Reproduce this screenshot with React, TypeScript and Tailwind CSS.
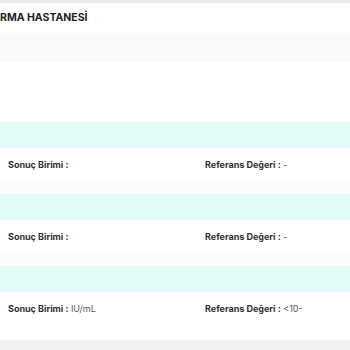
const results = [
  { unit: "", ref: "-" },
  { unit: "", ref: "-" },
  { unit: "IU/mL", ref: "<10-" },
];

export default function App() {
  return (
    <div className="w-[350px] h-[350px] overflow-hidden bg-white text-[#2f2f2f] font-['Inter','Liberation_Sans',sans-serif]">
      <div className="h-[3px] bg-[#eeeeee]" />
      <div className="h-[30px] flex items-center">
        <h1 className="text-[10.5px] font-bold text-[#222]">RMA HASTANESİ</h1>
      </div>
      <div className="h-[29px] bg-[#fafafa]" />
      <div className="h-[60px]" />
      {results.map((r, i) => (
        <div key={i}>
          <div className="h-[26px] bg-[#e2fbf8]" />
          <div className="h-[34px] flex items-center text-[9px]">
            <div className="w-[205px] pl-2">
              <span className="font-bold">Sonuç Birimi :</span>
              {r.unit && <span className="font-normal text-[#555]"> {r.unit}</span>}
            </div>
            <div>
              <span className="font-bold">Referans Değeri :</span>
              <span className="font-normal text-[#555]"> {r.ref}</span>
            </div>
          </div>
          {i < results.length - 1 ? <div className="h-[12px] bg-[#fcfcfc]" /> : <div className="h-[14px]" />}
        </div>
      ))}
      <div className="h-[20px] bg-[#f1f1f1]" />
    </div>
  );
}
